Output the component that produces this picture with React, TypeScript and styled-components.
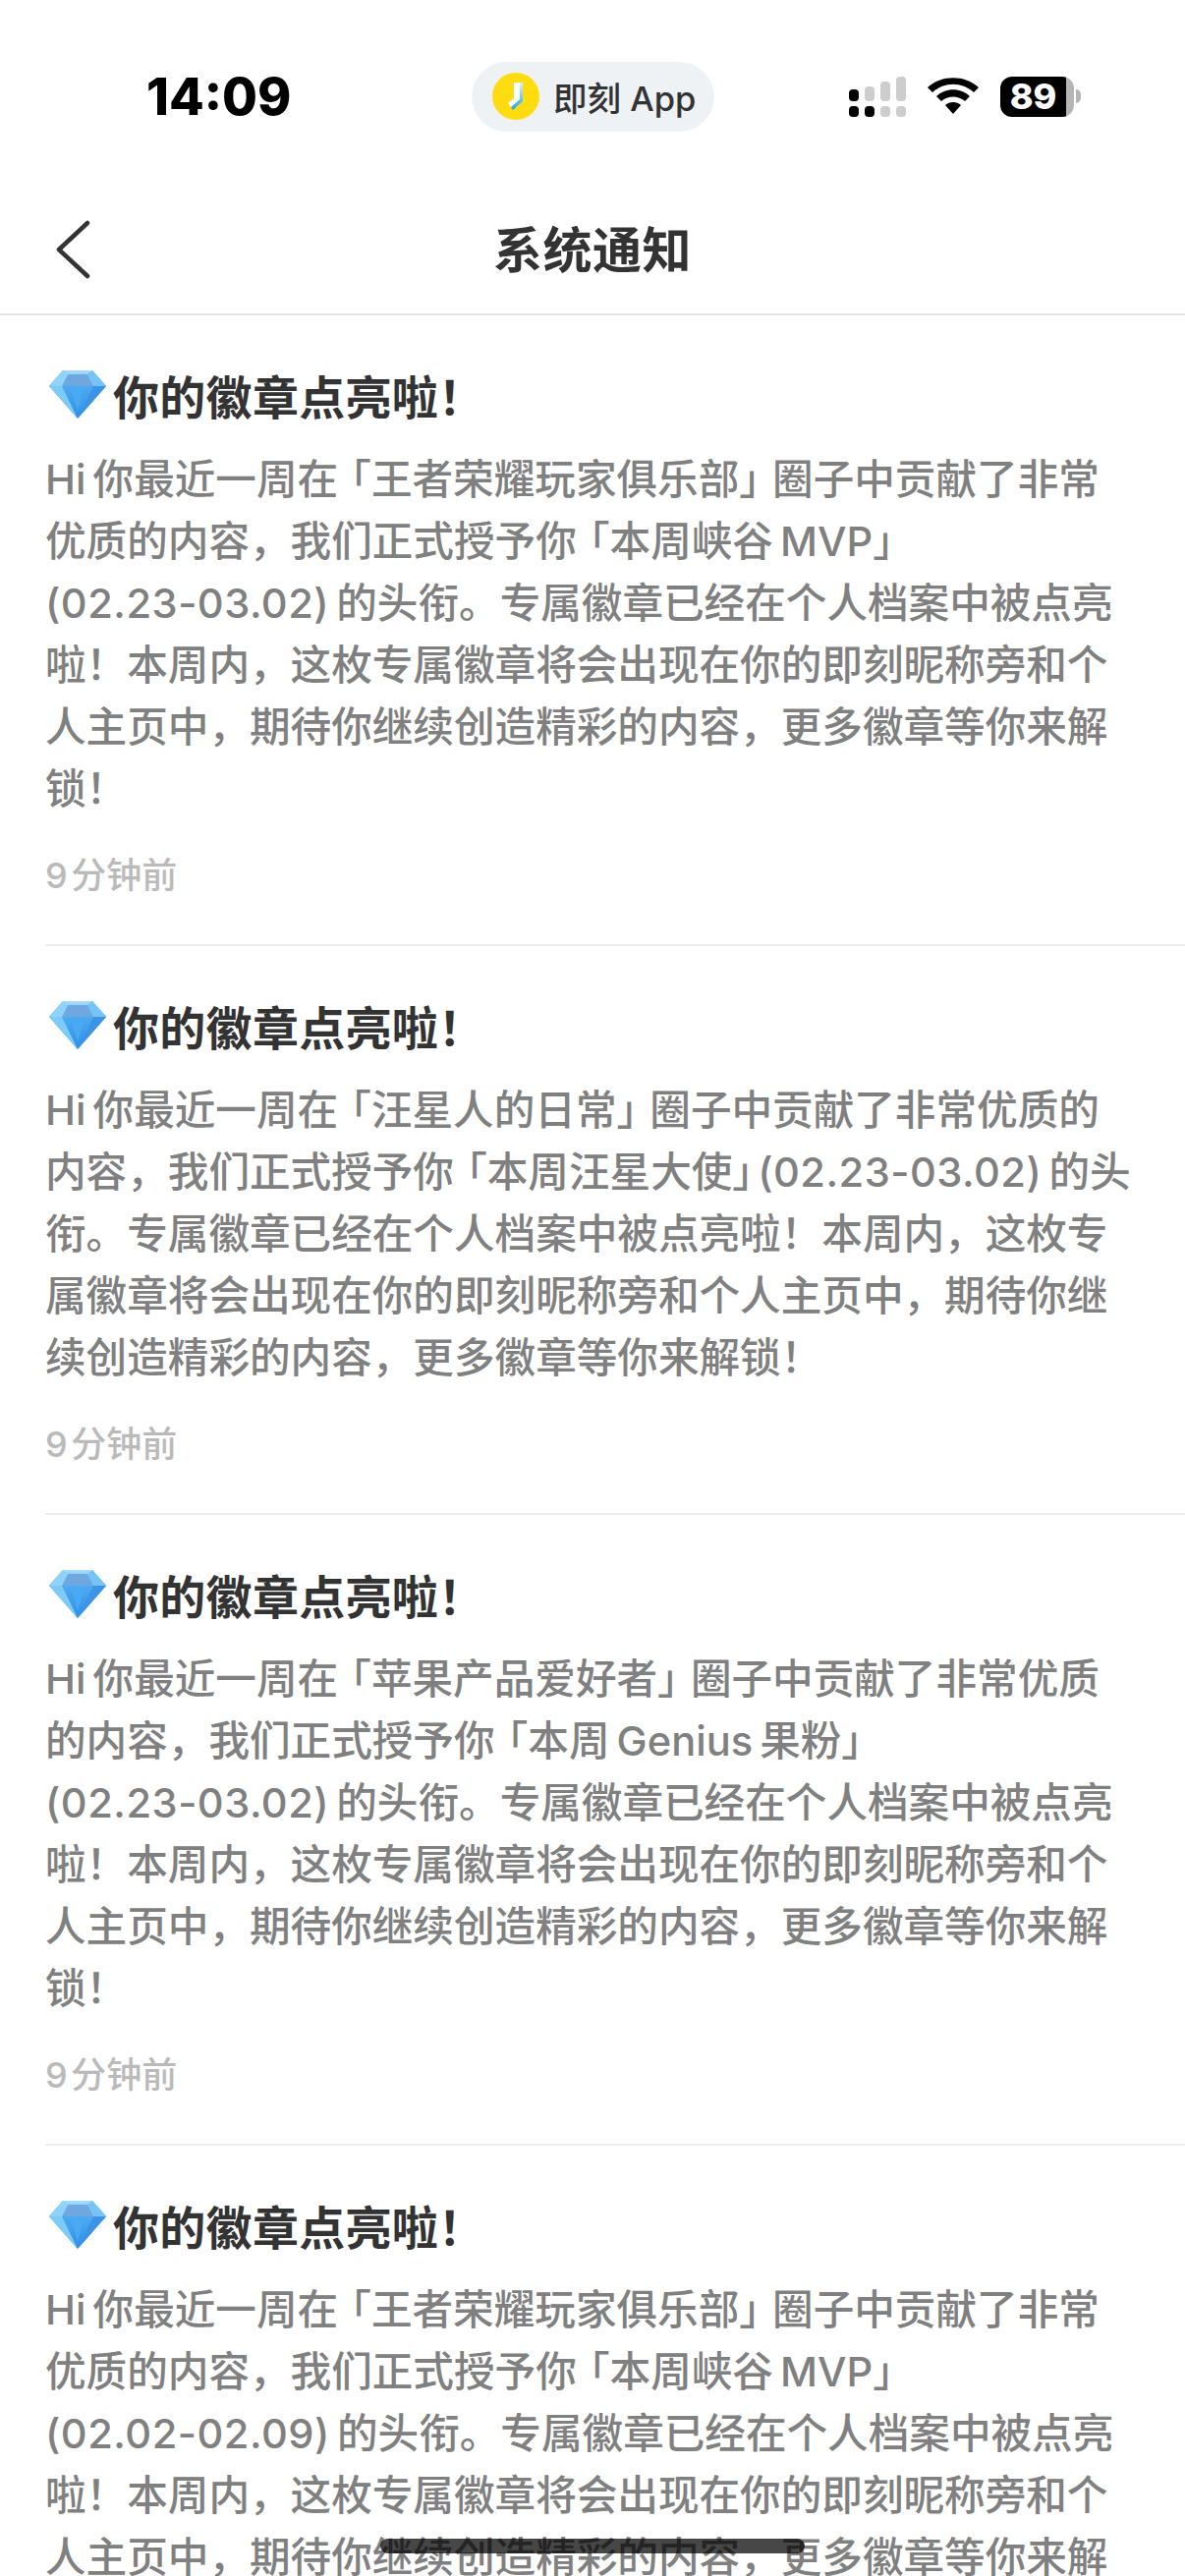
import styled, { createGlobalStyle } from 'styled-components';

const Global = createGlobalStyle`
  html, body {
    margin: 0;
    padding: 0;
    background: #fff;
  }
  * {
    box-sizing: border-box;
  }
`;

const FONT = `Inter, "Noto Sans CJK SC", sans-serif`;

const Page = styled.div`
  position: relative;
  width: 1206px;
  height: 2622px;
  overflow: hidden;
  background: #fff;
  font-family: ${FONT};
`;

const StatusBar = styled.div`
  display: grid;
  grid-template-columns: 480px 247px 1fr;
  align-items: center;
  height: 196px;
`;

const Clock = styled.div`
  padding-left: 149px;
  font-size: 52px;
  font-weight: 800;
  color: #000;
`;

const AppPill = styled.div`
  display: flex;
  align-items: center;
  gap: 14px;
  height: 71px;
  padding-left: 21px;
  border-radius: 36px;
  background: #eff2f5;
  font-size: 34.5px;
  font-weight: 500;
  color: #333;
  white-space: nowrap;
`;

const StatusIcons = styled.div`
  display: flex;
  align-items: center;
  justify-content: flex-end;
  gap: 22px;
  padding-right: 106px;
`;

const Battery = styled.div`
  display: flex;
  align-items: center;
  justify-content: center;
  width: 75px;
  height: 41px;
  padding-right: 8px;
  border-radius: 12px;
  background: linear-gradient(to right, #000 67px, #b5b5b5 67px);
  color: #fff;
  font-size: 36px;
  line-height: 41px;
  font-weight: 800;
`;

const BatteryWrap = styled.div`
  display: flex;
  align-items: center;
  gap: 2px;
`;

const BatteryTip = styled.div`
  width: 5px;
  height: 14px;
  border-radius: 0 7px 7px 0;
  background: #b5b5b5;
`;

const NavBar = styled.div`
  position: relative;
  display: flex;
  align-items: center;
  justify-content: center;
  height: 125px;
  padding-bottom: 14px;
  border-bottom: 2px solid #e4e4e4;
`;

const BackIcon = styled.svg`
  position: absolute;
  left: 56px;
  top: 28px;
`;

const NavTitle = styled.div`
  font-size: 50px;
  font-weight: 700;
  color: #333;
  letter-spacing: 0.5px;
`;

const Item = styled.div`
  margin-left: 46px;
  padding: 47px 0 47px;
  border-bottom: 2px solid #ececec;
`;

const ItemTitle = styled.div`
  display: flex;
  align-items: center;
  gap: 7px;
  height: 66px;
  margin-left: 4px;
  margin-bottom: 23px;
  font-size: 47px;
  font-weight: 700;
  letter-spacing: 0.3px;
  color: #333;
`;

const BodyLine = styled.div`
  height: 63px;
  line-height: 63px;
  font-size: 41.6px;
  font-weight: 500;
  color: #808080;
  white-space: nowrap;
  word-spacing: -4px;
`;

// 「」 sit tighter in the reference than a full-width cell
const Bracket = styled.span<{ $open: boolean; $tight: boolean }>`
  font-feature-settings: 'halt';
  padding-left: ${(p) => (p.$open ? '13px' : '0')};
  padding-right: ${(p) => (p.$open ? '0' : p.$tight ? '5px' : '13px')};
`;

const DateRange = styled.span`
  letter-spacing: 0.5px;
`;

const TimeAgo = styled.div`
  margin-top: 33px;
  height: 46px;
  line-height: 46px;
  font-size: 36px;
  font-weight: 500;
  word-spacing: -6px;
  color: #bababa;
`;

const HomeBar = styled.div`
  position: absolute;
  left: 387px;
  top: 2584px;
  width: 432px;
  height: 15px;
  border-radius: 8px;
  background: rgba(0, 0, 0, 0.72);
`;

function Diamond() {
  return (
    <svg width="58" height="50" viewBox="0 0 58 50">
      <defs>
        <linearGradient id="gemTop" x1="0" y1="0" x2="0" y2="1">
          <stop offset="0" stopColor="#a9dcfb" />
          <stop offset="1" stopColor="#5cb4f2" />
        </linearGradient>
        <linearGradient id="gemLow" x1="0" y1="0" x2="0" y2="1">
          <stop offset="0" stopColor="#5bb8f6" />
          <stop offset="1" stopColor="#2f8fe6" />
        </linearGradient>
      </defs>
      <polygon points="14,1 44,1 58,17 29,50 0,17" fill="url(#gemLow)" />
      <polygon points="14,1 44,1 58,17 0,17" fill="url(#gemTop)" />
      <polygon points="19,5 39,5 45,17 13,17" fill="#6fa8e0" />
      <polygon points="14,1 19,5 13,17 0,17" fill="#8fd3fa" />
      <polygon points="44,1 39,5 45,17 58,17" fill="#76c3f5" />
      <polygon points="13,17 29,50 0,17" fill="#7ccbf8" />
      <polygon points="45,17 29,50 58,17" fill="#3d94e6" />
      <polygon points="22,19 36,19 29,42" fill="#49a9f2" />
    </svg>
  );
}

function SignalIcon() {
  const tops = [
    { x: 0, h: 12, c: '#000' },
    { x: 16, h: 15, c: '#cdcdcd' },
    { x: 32, h: 20, c: '#cdcdcd' },
    { x: 48, h: 25, c: '#cdcdcd' },
  ];
  const lows = ['#000', '#000', '#cdcdcd', '#cdcdcd'];
  return (
    <svg width="58" height="41" viewBox="0 0 58 41">
      {tops.map((b) => (
        <rect key={b.x} x={b.x} y={25 - b.h} width="10" height={b.h} rx="4" fill={b.c} />
      ))}
      {lows.map((c, i) => (
        <rect key={i} x={i * 16} y="30" width="10" height="11" rx="4" fill={c} />
      ))}
    </svg>
  );
}

function WifiIcon() {
  return (
    <svg width="52" height="38" viewBox="0 0 52 38">
      <path d="M0 10 C14 -3 38 -3 52 10 L47 15 C35 4 17 4 5 15 Z" fill="#000" />
      <path d="M9 19 C18 10 34 10 43 19 L38 24 C31 18 21 18 14 24 Z" fill="#000" />
      <path d="M18 28 C22 24 30 24 34 28 L26 37 Z" fill="#000" />
    </svg>
  );
}

function JikeLogo() {
  return (
    <svg width="48" height="48" viewBox="0 0 48 48">
      <defs>
        <linearGradient id="jikeBlue" x1="0" y1="0" x2="0" y2="1">
          <stop offset="0" stopColor="#dff3f8" />
          <stop offset="1" stopColor="#1fa8e0" />
        </linearGradient>
      </defs>
      <circle cx="24" cy="24" r="24" fill="#ffdc10" />
      <path d="M26 10 L31 10 L31 29 L21 38 L19 35 Z" fill="url(#jikeBlue)" />
      <path d="M22 10 L28 10 L28 27 L19 35 L16 31 L22 26 Z" fill="#fff" />
    </svg>
  );
}

// splits a line so the corner brackets and date ranges can get their own spacing
function renderLine(line: string) {
  return line.split(/([「」]|\([\d.-]+\))/).map((part, i, parts) => {
    if (part === '「' || part === '」') {
      return (
        <Bracket key={i} $open={part === '「'} $tight={(parts[i + 2] ?? '').startsWith('(')}>
          {part}
        </Bracket>
      );
    }
    return part.startsWith('(') ? <DateRange key={i}>{part}</DateRange> : part;
  });
}

const LINES_A = (range: string) => [
  'Hi 你最近一周在「王者荣耀玩家俱乐部」圈子中贡献了非常',
  '优质的内容，我们正式授予你「本周峡谷 MVP」',
  `(${range}) 的头衔。专属徽章已经在个人档案中被点亮`,
  '啦！本周内，这枚专属徽章将会出现在你的即刻昵称旁和个',
  '人主页中，期待你继续创造精彩的内容，更多徽章等你来解',
  '锁！',
];

const notices = [
  { lines: LINES_A('02.23-03.02') },
  {
    lines: [
      'Hi 你最近一周在「汪星人的日常」圈子中贡献了非常优质的',
      '内容，我们正式授予你「本周汪星大使」(02.23-03.02) 的头',
      '衔。专属徽章已经在个人档案中被点亮啦！本周内，这枚专',
      '属徽章将会出现在你的即刻昵称旁和个人主页中，期待你继',
      '续创造精彩的内容，更多徽章等你来解锁！',
    ],
  },
  {
    lines: [
      'Hi 你最近一周在「苹果产品爱好者」圈子中贡献了非常优质',
      '的内容，我们正式授予你「本周 Genius 果粉」',
      '(02.23-03.02) 的头衔。专属徽章已经在个人档案中被点亮',
      '啦！本周内，这枚专属徽章将会出现在你的即刻昵称旁和个',
      '人主页中，期待你继续创造精彩的内容，更多徽章等你来解',
      '锁！',
    ],
  },
  { lines: LINES_A('02.02-02.09') },
];

export default function App() {
  return (
    <Page>
      <Global />
      <StatusBar>
        <Clock>14:09</Clock>
        <AppPill>
          <JikeLogo />
          即刻 App
        </AppPill>
        <StatusIcons>
          <SignalIcon />
          <WifiIcon />
          <BatteryWrap>
            <Battery>89</Battery>
            <BatteryTip />
          </BatteryWrap>
        </StatusIcons>
      </StatusBar>

      <NavBar>
        <BackIcon width="36" height="60" viewBox="0 0 36 60">
          <path d="M33 3 L4 30 L33 57" fill="none" stroke="#333" strokeWidth="4.5" strokeLinecap="round" strokeLinejoin="round" />
        </BackIcon>
        <NavTitle>系统通知</NavTitle>
      </NavBar>

      {notices.map((notice, i) => (
        <Item key={i}>
          <ItemTitle>
            <Diamond />
            你的徽章点亮啦！
          </ItemTitle>
          {notice.lines.map((line) => (
            <BodyLine key={line}>{renderLine(line)}</BodyLine>
          ))}
          <TimeAgo>9 分钟前</TimeAgo>
        </Item>
      ))}

      <HomeBar />
    </Page>
  );
}
